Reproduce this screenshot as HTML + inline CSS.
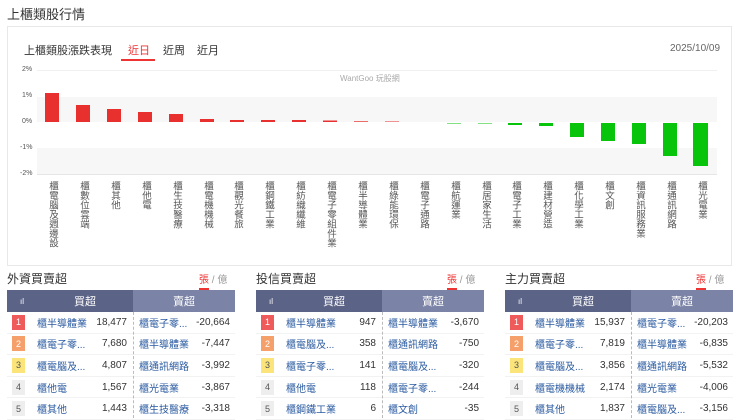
<!DOCTYPE html><html><head><meta charset="utf-8"><style>
*{margin:0;padding:0;box-sizing:border-box}
body{width:740px;height:418px;background:#fff;font-family:"Liberation Sans","Noto Sans CJK TC",sans-serif;position:relative;overflow:hidden;color:#333}
.a{position:absolute}
.lbl{position:absolute;top:181px;writing-mode:vertical-rl;font-size:9.5px;line-height:10px;color:#555;letter-spacing:0px}
.yt{position:absolute;left:22px;font-size:7px;color:#555}
.tb{position:absolute;top:290px;width:228px}
.hd{height:22px;display:flex;font-size:11px;color:#fff}
.hd div{display:flex;align-items:center;justify-content:center}
.row{height:21.6px;display:flex;align-items:center;font-size:10px;border-bottom:1px solid #f2f2f2;position:relative}
.bd{width:13px;height:15px;font-size:9px;display:flex;align-items:center;justify-content:center;margin-left:5px;color:#fff}
.n1{color:#2a5aa0;position:absolute;left:30px}
.v1{position:absolute;left:71px;width:49px;text-align:right;color:#333}
.n2{color:#2a5aa0;position:absolute;left:132px}
.v2{position:absolute;left:175px;width:48px;text-align:right;color:#333}
.dl{position:absolute;top:312px;height:106px;border-left:1px dashed #bbb}
.ttl{position:absolute;top:270px;font-size:12px;color:#333}
.un{position:absolute;top:271px;font-size:10px;color:#999}
.un b{color:#e33;font-weight:normal;border-bottom:2px solid #e33;padding-bottom:2px}
</style></head><body>
<div class="a" style="left:7px;top:4px;font-size:13px;color:#333">上櫃類股行情</div>
<div class="a" style="left:7px;top:26px;width:725px;height:240px;border:1px solid #e8e8e8"></div>
<div class="a" style="left:24px;top:42px;font-size:11px;color:#333">上櫃類股漲跌表現</div>
<div class="a" style="left:128px;top:42px;font-size:11px;color:#e33">近日</div>
<div class="a" style="left:121px;top:59px;width:34px;height:2px;background:#e33"></div>
<div class="a" style="left:163px;top:42px;font-size:11px;color:#333">近周</div>
<div class="a" style="left:197px;top:42px;font-size:11px;color:#333">近月</div>
<div class="a" style="left:670px;top:43px;font-size:10px;color:#666">2025/10/09</div>
<div class="a" style="left:37px;top:70px;width:680px;height:1px;background:#f0f0f0"></div>
<div class="a" style="left:37px;top:97px;width:680px;height:25px;background:#f7f7f7"></div>
<div class="a" style="left:37px;top:148px;width:680px;height:26px;background:#f7f7f7"></div>
<div class="a" style="left:37px;top:174px;width:680px;height:1px;background:#e6e6e6"></div>
<div class="a" style="left:340px;top:73px;font-size:8px;color:#aaa">WantGoo 玩股網</div>
<div class="yt" style="top:66px">2%</div><div class="yt" style="top:92px">1%</div><div class="yt" style="top:118px">0%</div><div class="yt" style="top:144px;left:20px">-1%</div><div class="yt" style="top:170px;left:20px">-2%</div>
<svg class="a" style="left:0;top:0" width="740" height="180">
<g fill="#e8302f">
<rect x="45" y="93" width="14" height="29"/><rect x="76" y="105" width="14" height="17"/><rect x="107" y="109" width="14" height="13"/><rect x="138" y="112" width="14" height="10"/><rect x="169" y="114" width="14" height="8"/><rect x="200" y="119" width="14" height="3"/><rect x="230" y="120" width="14" height="2"/><rect x="261" y="120" width="14" height="2"/><rect x="292" y="120" width="14" height="2"/><rect x="323" y="120.5" width="14" height="1.5"/><rect x="354" y="121.3" width="14" height="0.7"/><rect x="385" y="121.5" width="14" height="0.5"/></g>
<g fill="#08c40a"><rect x="447" y="123" width="14" height="1" opacity=".5"/><rect x="478" y="123" width="14" height="1" opacity=".5"/><rect x="508" y="123" width="14" height="2"/><rect x="539" y="123" width="14" height="3"/><rect x="570" y="123" width="14" height="14"/><rect x="601" y="123" width="14" height="18"/><rect x="632" y="123" width="14" height="21"/><rect x="663" y="123" width="14" height="33"/><rect x="693" y="123" width="15" height="43"/></g>
</svg>
<div class="lbl" style="left:47px">櫃電腦及週邊設</div><div class="lbl" style="left:78px">櫃數位雲端</div><div class="lbl" style="left:109px">櫃其他</div><div class="lbl" style="left:140px">櫃他電</div><div class="lbl" style="left:171px">櫃生技醫療</div><div class="lbl" style="left:202px">櫃電機機械</div><div class="lbl" style="left:232px">櫃觀光餐旅</div><div class="lbl" style="left:263px">櫃鋼鐵工業</div><div class="lbl" style="left:294px">櫃紡織纖維</div><div class="lbl" style="left:325px">櫃電子零組件業</div><div class="lbl" style="left:356px">櫃半導體業</div><div class="lbl" style="left:387px">櫃綠能環保</div><div class="lbl" style="left:418px">櫃電子通路</div><div class="lbl" style="left:449px">櫃航運業</div><div class="lbl" style="left:480px">櫃居家生活</div><div class="lbl" style="left:510px">櫃電子工業</div><div class="lbl" style="left:541px">櫃建材營造</div><div class="lbl" style="left:572px">櫃化學工業</div><div class="lbl" style="left:603px">櫃文創</div><div class="lbl" style="left:634px">櫃資訊服務業</div><div class="lbl" style="left:665px">櫃通訊網路</div><div class="lbl" style="left:696px">櫃光電業</div>

<div class="ttl" style="left:7px">外資買賣超</div><div class="un" style="left:199px"><b>張</b> / 億</div>
<div class="ttl" style="left:256px">投信買賣超</div><div class="un" style="left:447px"><b>張</b> / 億</div>
<div class="ttl" style="left:505px">主力買賣超</div><div class="un" style="left:696px"><b>張</b> / 億</div>

<div class="tb" style="left:7px">
<div class="hd"><div style="width:30px;background:#5b6387;font-size:8px">ıl</div><div style="width:96px;background:#5b6387">買超</div><div style="width:102px;background:#7b83a6">賣超</div></div>
<div class="row"><div class="bd" style="background:#ef5a5a">1</div><span class="n1">櫃半導體業</span><span class="v1">18,477</span><span class="n2">櫃電子零...</span><span class="v2">-20,664</span></div>
<div class="row"><div class="bd" style="background:#f5a06a">2</div><span class="n1">櫃電子零...</span><span class="v1">7,680</span><span class="n2">櫃半導體業</span><span class="v2">-7,447</span></div>
<div class="row"><div class="bd" style="background:#fbe57a;color:#555">3</div><span class="n1">櫃電腦及...</span><span class="v1">4,807</span><span class="n2">櫃通訊網路</span><span class="v2">-3,992</span></div>
<div class="row"><div class="bd" style="background:#eee;color:#555">4</div><span class="n1">櫃他電</span><span class="v1">1,567</span><span class="n2">櫃光電業</span><span class="v2">-3,867</span></div>
<div class="row"><div class="bd" style="background:#eee;color:#555">5</div><span class="n1">櫃其他</span><span class="v1">1,443</span><span class="n2">櫃生技醫療</span><span class="v2">-3,318</span></div>
</div>
<div class="dl" style="left:133px"></div>

<div class="tb" style="left:256px">
<div class="hd"><div style="width:30px;background:#5b6387;font-size:8px">ıl</div><div style="width:96px;background:#5b6387">買超</div><div style="width:102px;background:#7b83a6">賣超</div></div>
<div class="row"><div class="bd" style="background:#ef5a5a">1</div><span class="n1">櫃半導體業</span><span class="v1">947</span><span class="n2">櫃半導體業</span><span class="v2">-3,670</span></div>
<div class="row"><div class="bd" style="background:#f5a06a">2</div><span class="n1">櫃電腦及...</span><span class="v1">358</span><span class="n2">櫃通訊網路</span><span class="v2">-750</span></div>
<div class="row"><div class="bd" style="background:#fbe57a;color:#555">3</div><span class="n1">櫃電子零...</span><span class="v1">141</span><span class="n2">櫃電腦及...</span><span class="v2">-320</span></div>
<div class="row"><div class="bd" style="background:#eee;color:#555">4</div><span class="n1">櫃他電</span><span class="v1">118</span><span class="n2">櫃電子零...</span><span class="v2">-244</span></div>
<div class="row"><div class="bd" style="background:#eee;color:#555">5</div><span class="n1">櫃鋼鐵工業</span><span class="v1">6</span><span class="n2">櫃文創</span><span class="v2">-35</span></div>
</div>
<div class="dl" style="left:382px"></div>

<div class="tb" style="left:505px">
<div class="hd"><div style="width:30px;background:#5b6387;font-size:8px">ıl</div><div style="width:96px;background:#5b6387">買超</div><div style="width:102px;background:#7b83a6">賣超</div></div>
<div class="row"><div class="bd" style="background:#ef5a5a">1</div><span class="n1">櫃半導體業</span><span class="v1">15,937</span><span class="n2">櫃電子零...</span><span class="v2">-20,203</span></div>
<div class="row"><div class="bd" style="background:#f5a06a">2</div><span class="n1">櫃電子零...</span><span class="v1">7,819</span><span class="n2">櫃半導體業</span><span class="v2">-6,835</span></div>
<div class="row"><div class="bd" style="background:#fbe57a;color:#555">3</div><span class="n1">櫃電腦及...</span><span class="v1">3,856</span><span class="n2">櫃通訊網路</span><span class="v2">-5,532</span></div>
<div class="row"><div class="bd" style="background:#eee;color:#555">4</div><span class="n1">櫃電機機械</span><span class="v1">2,174</span><span class="n2">櫃光電業</span><span class="v2">-4,006</span></div>
<div class="row"><div class="bd" style="background:#eee;color:#555">5</div><span class="n1">櫃其他</span><span class="v1">1,837</span><span class="n2">櫃電腦及...</span><span class="v2">-3,156</span></div>
</div>
<div class="dl" style="left:631px"></div>
</body></html>
